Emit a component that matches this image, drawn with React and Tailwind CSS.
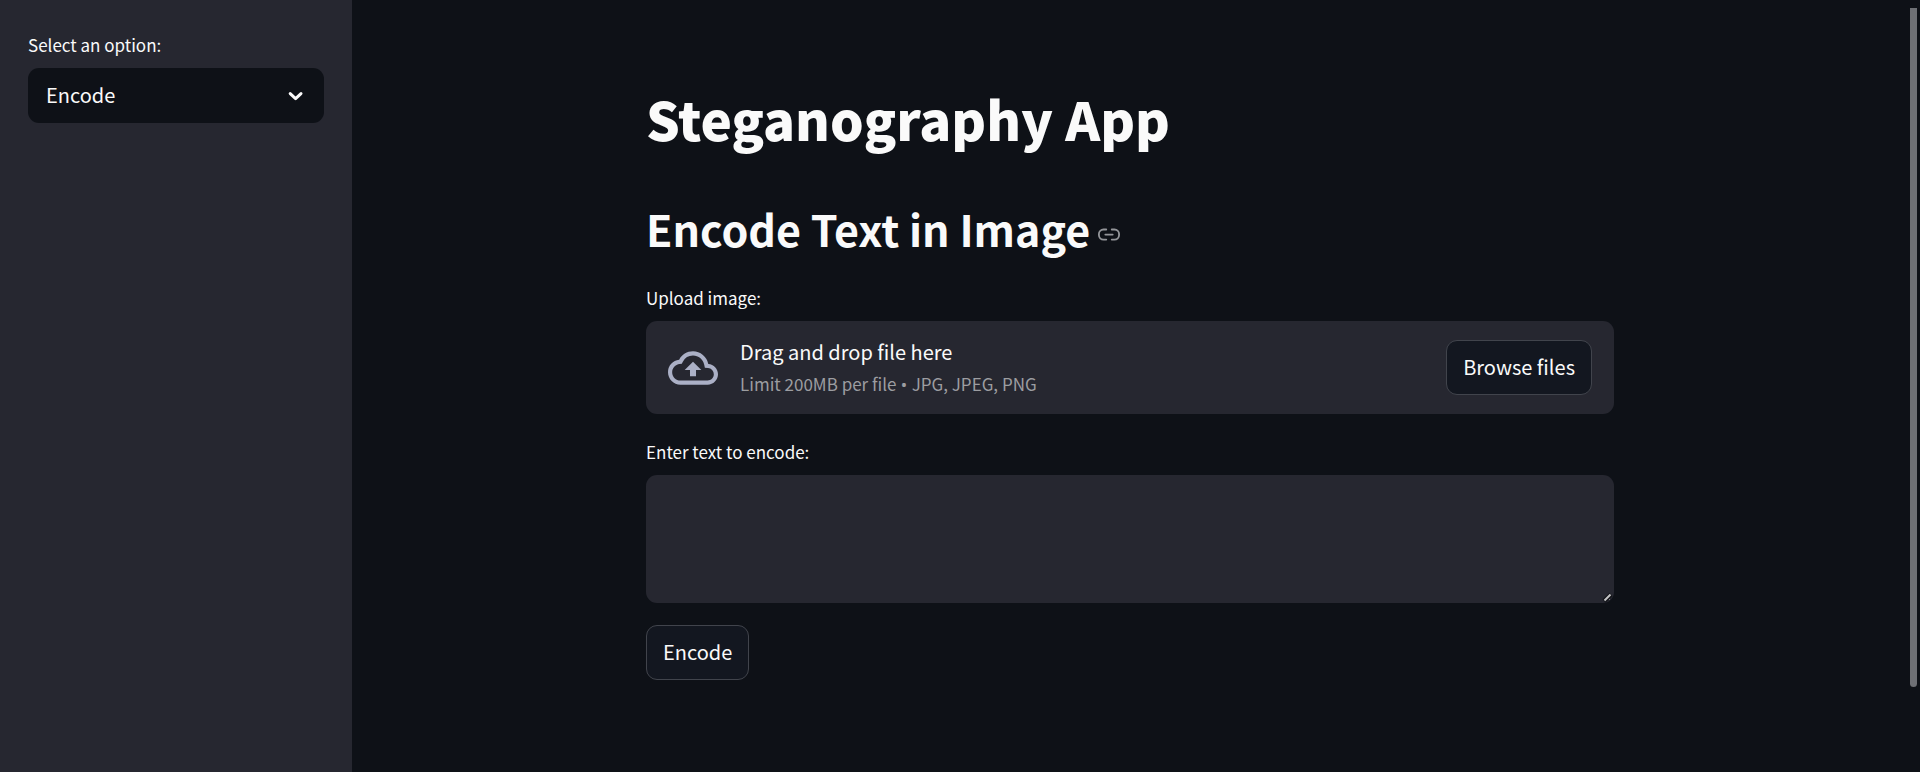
import { useState } from "react";

const LABEL = "block h-8 mb-[7px] text-[17px] leading-8";
const BUTTON =
  "h-[55px] rounded-[11px] border border-[#41444c] bg-[#131720] px-4 pb-0.5 text-xl text-[#fafafa]";

function ChevronIcon() {
  return (
    <svg className="pointer-events-none absolute right-[17px] h-[22px] w-[22px]" viewBox="0 0 22 22" fill="none" stroke="#fafafa" strokeWidth="3" strokeLinecap="round" strokeLinejoin="round" aria-hidden="true">
      <path d="M5.2 8.6 10.6 13.6 16 8.6" />
    </svg>
  );
}

function CloudUploadIcon() {
  return (
    <svg className="h-[50px] w-[50px] shrink-0" viewBox="0 0 24 24" fill="#abb0c6" aria-hidden="true">
      <path d="M19.35 10.04A7.49 7.49 0 0 0 12 4C9.11 4 6.6 5.64 5.35 8.04A5.994 5.994 0 0 0 0 14c0 3.31 2.69 6 6 6h13c2.76 0 5-2.24 5-5 0-2.64-2.05-4.78-4.65-4.96zM19 18H6c-2.21 0-4-1.79-4-4 0-2.05 1.53-3.76 3.56-3.97l1.07-.11.5-.95A5.469 5.469 0 0 1 12 6c2.62 0 4.88 1.86 5.39 4.43l.3 1.5 1.53.11A2.98 2.98 0 0 1 22 15c0 1.65-1.35 3-3 3zM8 13h2.55v3h2.9v-3H16l-4-4z" />
    </svg>
  );
}

function LinkIcon() {
  return (
    <svg className="h-[22px] w-[22px]" viewBox="0 0 24 24" fill="none" stroke="#939599" strokeWidth="2" strokeLinecap="round" strokeLinejoin="round" aria-hidden="true">
      <path d="M15 6h3a5 5 0 0 1 5 5v1a5 5 0 0 1-5 5h-3m-6 0H6a5 5 0 0 1-5-5v-1a5 5 0 0 1 5-5h3" />
      <path d="M8 11.5h8" />
    </svg>
  );
}

function ResizeGrip() {
  return (
    <svg className="pointer-events-none absolute right-0 bottom-0 h-3 w-3" viewBox="0 0 12 12" fill="none" aria-hidden="true">
      <path d="M2 10 9 3.500" stroke="#131419" strokeWidth="4.500" />
      <path d="M2.500 9.500 8.500 3.500" stroke="#c4c4c6" strokeWidth="2" />
      <path d="M7 8.500h1" stroke="#77787d" />
    </svg>
  );
}

export default function App() {
  const [mode, setMode] = useState("Encode");
  const [text, setText] = useState("");

  return (
    <div className="flex min-h-screen bg-[#0e1117] font-['Noto_Sans_CJK_SC','Noto_Sans',sans-serif] text-[#fafafa]">
      <aside className="w-[352px] shrink-0 bg-[#262730] px-7 pt-[29px]">
        <label htmlFor="mode" className={LABEL}>
          Select an option:
        </label>
        <div className="relative flex items-center">
          <select
            id="mode"
            value={mode}
            onChange={(e) => setMode(e.target.value)}
            className="h-[55px] w-full appearance-none rounded-[11px] bg-[#0e1117] pr-12 pb-0.5 pl-[18px] text-xl text-[#fafafa]"
          >
            <option>Encode</option>
            <option>Decode</option>
          </select>
          <ChevronIcon />
        </div>
      </aside>

      <main className="min-w-0 flex-1 px-6 pt-[82px] pb-20">
        <div className="mx-auto max-w-[968px]">
          <h1 className="text-[53px] leading-[72px] font-black">Steganography App</h1>
          <h2 className="mt-11 mb-6 flex items-center gap-2 text-[43px] leading-[60px] font-semibold">
            Encode Text in Image
            <a href="#encode-text-in-image" aria-label="Link to heading" className="pt-3.5">
              <LinkIcon />
            </a>
          </h2>

          <div className="flex flex-col gap-[22px]">
            <section>
              <label htmlFor="browse" className={LABEL}>
                Upload image:
              </label>
              <div className="flex h-[93px] items-center rounded-[11px] bg-[#262730] px-[22px]">
                <CloudUploadIcon />
                <div className="ml-[22px] flex-1">
                  <p className="text-xl leading-8">Drag and drop file here</p>
                  <p className="text-[17px] leading-8 text-[#9c9da1]">
                    Limit 200MB per file
                    <span className="font-['Noto_Sans',sans-serif] leading-none"> • </span>
                    JPG, JPEG, PNG
                  </p>
                </div>
                <button id="browse" type="button" className={BUTTON}>
                  Browse files
                </button>
              </div>
            </section>

            <section>
              <label htmlFor="message" className={LABEL}>
                Enter text to encode:
              </label>
              <div className="relative">
                <textarea
                  id="message"
                  value={text}
                  onChange={(e) => setText(e.target.value)}
                  className="block h-32 w-full resize-y rounded-[11px] bg-[#262730] p-4 text-xl text-[#fafafa] [&::-webkit-resizer]:bg-transparent"
                />
                <ResizeGrip />
              </div>
            </section>

            <div>
              <button type="button" className={BUTTON}>
                Encode
              </button>
            </div>
          </div>
        </div>
      </main>

      <div className="h-screen w-3 shrink-0 px-0.5 pt-2" aria-hidden="true">
        <div className="h-8/9 w-[7px] rounded-b-full bg-[#6e7075]" />
      </div>
    </div>
  );
}
